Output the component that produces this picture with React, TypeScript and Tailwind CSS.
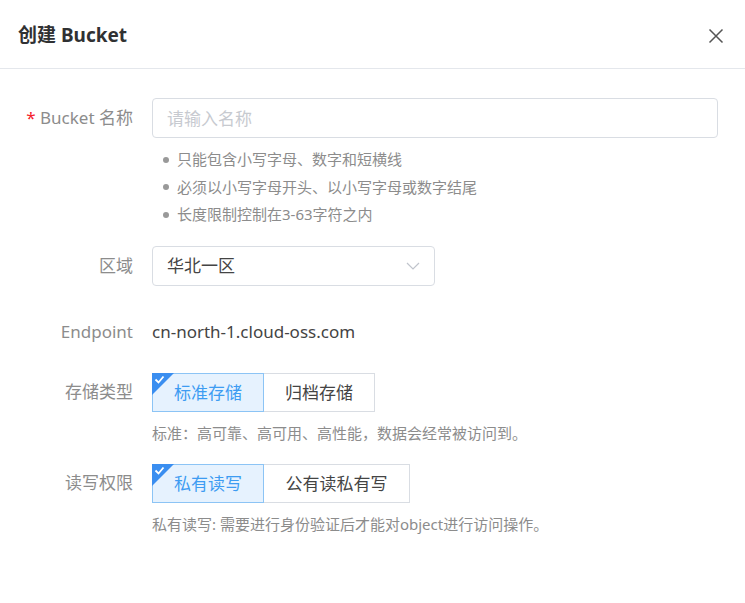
import React, { useState } from 'react';

const font = { fontFamily: '"Noto Sans", "Noto Sans CJK SC", sans-serif' };

function CheckCorner() {
    return (
        <svg className="absolute -left-px -top-px" width="22" height="22" viewBox="0 0 22 22">
            <path d="M0 0 H22 L0 22 Z" fill="#3a8ef0" />
            <path d="M3.5 6.5 L6.5 9.5 L11.5 3.5" fill="none" stroke="#fff" strokeWidth="1.8" />
        </svg>
    );
}

function Segmented({ options, value, onChange }: { options: { label: string; w: string }[]; value: number; onChange: (i: number) => void }) {
    return (
        <div className="flex">
            {options.map((o, i) => {
                const active = i === value;
                return (
                    <button
                        key={o.label}
                        onClick={() => onChange(i)}
                        className={`relative h-[39px] ${o.w} text-[17px] leading-none ${i > 0 ? '-ml-px' : ''} ${
                            active
                                ? 'z-10 border border-[#8cc4f5] bg-[#e6f2fe] text-[#3d9cf2]'
                                : 'border border-[#d9dde3] bg-white text-[#444]'
                        }`}
                    >
                        {active && <CheckCorner />}
                        {o.label}
                    </button>
                );
            })}
        </div>
    );
}

export default function App() {
    const [storage, setStorage] = useState(0);
    const [acl, setAcl] = useState(0);

    return (
        <div style={font} className="w-[745px] h-[603px] bg-white text-[#333]">
            {/* Header */}
            <div className="flex h-[69px] items-center justify-between border-b border-[#e4e7ec] pt-[3px] pl-[18px] pr-[21px]">
                <h2 className="text-[19px] font-bold leading-none text-[#303133]">创建 Bucket</h2>
                <button className="text-[#555]">
                    <svg width="16" height="16" viewBox="0 0 16 16" fill="none" stroke="currentColor" strokeWidth="1.5">
                        <path d="M1.5 1.5 L14.5 14.5 M14.5 1.5 L1.5 14.5" />
                    </svg>
                </button>
            </div>

            <div className="pt-[29px]">
                {/* Bucket name */}
                <div className="flex items-center gap-[19px]">
                    <label className="w-[133px] text-right text-[17px] text-[#8c8c8c]">
                        <span className="text-[#f5222d]">* </span>Bucket 名称
                    </label>
                    <input
                        placeholder="请输入名称"
                        className="h-[40px] w-[566px] rounded-[4px] border border-[#d9dde3] px-[14px] text-[17px] outline-none placeholder:text-[#c7cad0]"
                    />
                </div>
                <ul className="mt-[8px] ml-[163px] text-[15px] leading-[27.5px] text-[#8c8c8c]">
                    {['只能包含小写字母、数字和短横线', '必须以小写字母开头、以小写字母或数字结尾', '长度限制控制在3-63字符之内'].map((t) => (
                        <li key={t} className="flex items-center gap-[8px]">
                            <span className="h-[6px] w-[6px] rounded-full bg-[#999]" />
                            {t}
                        </li>
                    ))}
                </ul>

                {/* Region */}
                <div className="mt-[17px] flex items-center gap-[19px]">
                    <label className="w-[133px] text-right text-[17px] text-[#8c8c8c]">区域</label>
                    <div className="flex h-[40px] w-[283px] items-center justify-between rounded-[4px] border border-[#d9dde3] pl-[14px] pr-[14px]">
                        <span className="text-[17px] text-[#444]">华北一区</span>
                        <svg width="14" height="8" viewBox="0 0 14 8" fill="none" stroke="#c0c4cc" strokeWidth="1.2">
                            <path d="M1 1 L7 7 L13 1" />
                        </svg>
                    </div>
                </div>

                {/* Endpoint */}
                <div className="mt-[26px] flex h-[40px] items-center gap-[19px]">
                    <label className="w-[133px] text-right text-[17px] text-[#8c8c8c]">Endpoint</label>
                    <span className="text-[17px] text-[#444]">cn-north-1.cloud-oss.com</span>
                </div>

                {/* Storage type */}
                <div className="mt-[21px] flex items-center gap-[19px]">
                    <label className="w-[133px] text-right text-[17px] text-[#8c8c8c]">存储类型</label>
                    <Segmented
                        options={[
                            { label: '标准存储', w: 'w-[112px]' },
                            { label: '归档存储', w: 'w-[112px]' },
                        ]}
                        value={storage}
                        onChange={setStorage}
                    />
                </div>
                <p className="mt-[10px] ml-[152px] text-[15px] leading-[22px] text-[#8c8c8c]">
                    标准：高可靠、高可用、高性能，数据会经常被访问到。
                </p>

                {/* ACL */}
                <div className="mt-[20px] flex items-center gap-[19px]">
                    <label className="w-[133px] text-right text-[17px] text-[#8c8c8c]">读写权限</label>
                    <Segmented
                        options={[
                            { label: '私有读写', w: 'w-[112px]' },
                            { label: '公有读私有写', w: 'w-[147px]' },
                        ]}
                        value={acl}
                        onChange={setAcl}
                    />
                </div>
                <p className="mt-[10px] ml-[152px] text-[15px] leading-[22px] text-[#8c8c8c]">
                    私有读写: 需要进行身份验证后才能对object进行访问操作。
                </p>
            </div>
        </div>
    );
}
